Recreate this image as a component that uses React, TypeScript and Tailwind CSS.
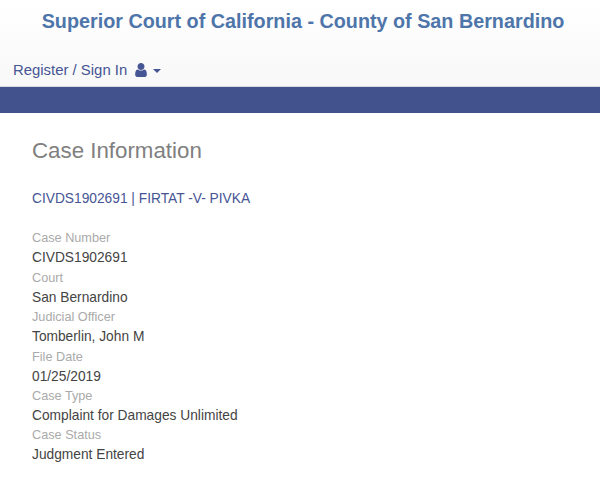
const fields = [
  ["Case Number", "CIVDS1902691"],
  ["Court", "San Bernardino"],
  ["Judicial Officer", "Tomberlin, John M"],
  ["File Date", "01/25/2019"],
  ["Case Type", "Complaint for Damages Unlimited"],
  ["Case Status", "Judgment Entered"],
];

const UserIcon = () => (
  <svg viewBox="256 128 1280 1536" className="ml-[8px] h-[14px] w-[12px] fill-current">
    <path d="M1536 1399q0 109-62.5 187t-150.5 78h-854q-88 0-150.5-78t-62.5-187q0-85 8.5-160.5t31.5-152 58.5-131 94-89 134.5-34.5q131 128 313 128t313-128q76 0 134.5 34.5t94 89 58.5 131 31.5 152 8.5 160.5zm-256-887q0 159-112.5 271.5t-271.5 112.5-271.5-112.5-112.5-271.5 112.5-271.5 271.5-112.5 271.5 112.5 112.5 271.5z" />
  </svg>
);

export default function App() {
  return (
    <div className="h-[480px] overflow-hidden bg-white font-['Liberation_Sans',sans-serif] text-[13.75px] leading-[20px] text-[#444]">
      <header className="h-[87px] bg-gradient-to-b from-white to-[#f8f8f8] border-b border-[#d8d8e0]">
        <h1 className="pt-[10px] pl-[6px] text-center text-[19.78px] leading-[22px] font-bold text-[#4e75aa]">
          Superior Court of California - County of San Bernardino
        </h1>
        <div className="mt-[28px] flex items-center pl-[13px] text-[14.9px] text-[#465594]">
          <span>Register / Sign In</span>
          <UserIcon />
          <span className="ml-[6px] mt-[2px] border-x-[4px] border-t-[4px] border-x-transparent border-t-[#465594]" />
        </div>
      </header>
      <div className="h-[26px] bg-[#42528c]" />
      <main className="px-[32px] pt-[25px]">
        <h2 className="text-[22.3px] leading-[26px] text-[#808080]">Case Information</h2>
        <p className="mt-[25px] text-[#465594]">CIVDS1902691 | FIRTAT -V- PIVKA</p>
        <dl className="mt-[20.4px]">
          {fields.map(([label, value]) => (
            <div key={label} className="h-[39.4px]">
              <dt className="text-[12.7px] leading-[19px] text-[#aaa]">{label}</dt>
              <dd className="leading-[19.4px]">{value}</dd>
            </div>
          ))}
        </dl>
      </main>
    </div>
  );
}
